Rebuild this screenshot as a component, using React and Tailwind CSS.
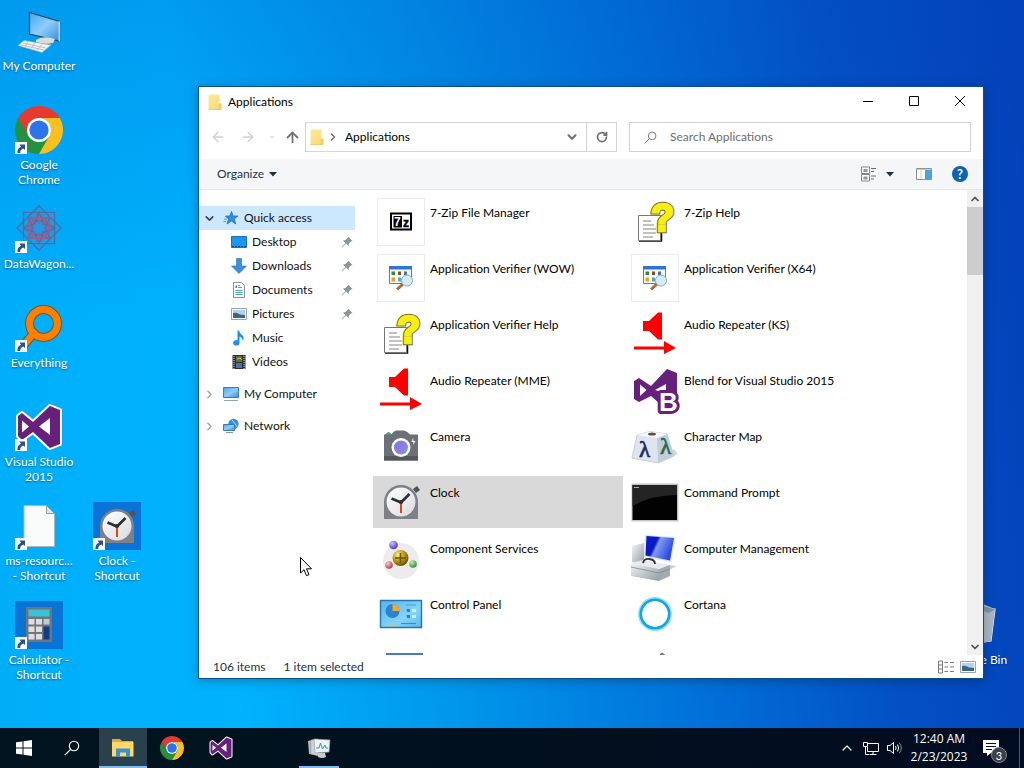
import React from 'react';
import clsx from 'clsx';
import {
  ArrowLeft,
  ArrowRight,
  ArrowUp,
  ChevronDown,
  ChevronRight,
  ChevronUp,
  RotateCw,
} from 'lucide-react';

const Svg = ({ box = 48, className = 'size-12', children }) => (
  <svg
    viewBox={`0 0 ${box} ${box}`}
    className={clsx('block shrink-0 overflow-visible', className)}
    fill="none"
    aria-hidden="true"
  >
    {children}
  </svg>
);

// Gradients shared by every icon on the page
const Gradients = () => (
  <svg className="absolute size-0" aria-hidden="true">
    <defs>
      <linearGradient id="screen" x1="0" y1="0" x2="1" y2="1">
        <stop offset="0" stopColor="#3fa9f0" />
        <stop offset="0.5" stopColor="#8fcdfa" />
        <stop offset="1" stopColor="#2f8fe0" />
      </linearGradient>
      <linearGradient id="folder" x1="0" y1="0" x2="1" y2="1">
        <stop offset="0" stopColor="#fdeaa0" />
        <stop offset="1" stopColor="#f8d870" />
      </linearGradient>
      <linearGradient id="metal" x1="0" y1="0" x2="1" y2="1">
        <stop offset="0" stopColor="#f4f6f7" />
        <stop offset="1" stopColor="#939da3" />
      </linearGradient>
      <linearGradient id="royal" x1="0" y1="0" x2="1" y2="0.4">
        <stop offset="0" stopColor="#0a1fd0" />
        <stop offset="0.4" stopColor="#0818c0" />
        <stop offset="0.5" stopColor="#7f9cf4" />
        <stop offset="1" stopColor="#2a48dc" />
      </linearGradient>
      <linearGradient id="lens" x1="0" y1="0" x2="1" y2="1">
        <stop offset="0" stopColor="#4f8fe8" />
        <stop offset="0.5" stopColor="#9a78dc" />
        <stop offset="1" stopColor="#5aa8f0" />
      </linearGradient>
      <linearGradient id="face" x1="0" y1="0" x2="1" y2="1">
        <stop offset="0" stopColor="#ffffff" />
        <stop offset="1" stopColor="#d8dadd" />
      </linearGradient>
      <linearGradient id="panel" x1="0" y1="0" x2="1" y2="1">
        <stop offset="0" stopColor="#4fb4ea" />
        <stop offset="0.6" stopColor="#86d4f8" />
        <stop offset="1" stopColor="#5abcec" />
      </linearGradient>
      <radialGradient id="gold" cx="0.35" cy="0.3" r="0.8">
        <stop offset="0" stopColor="#fff08a" />
        <stop offset="0.5" stopColor="#b89410" />
        <stop offset="1" stopColor="#5a4600" />
      </radialGradient>
      <radialGradient id="violet" cx="0.35" cy="0.3" r="0.8">
        <stop offset="0" stopColor="#c8c0ff" />
        <stop offset="1" stopColor="#3d2bb8" />
      </radialGradient>
      <radialGradient id="rose" cx="0.35" cy="0.3" r="0.8">
        <stop offset="0" stopColor="#ffc8c8" />
        <stop offset="1" stopColor="#a83038" />
      </radialGradient>
      <radialGradient id="leaf" cx="0.35" cy="0.3" r="0.8">
        <stop offset="0" stopColor="#b8f0b0" />
        <stop offset="1" stopColor="#2c8030" />
      </radialGradient>
    </defs>
  </svg>
);

const Chrome = ({ className }) => (
  <Svg className={className}>
    <path d="M3.22 12A24 24 0 0 1 44.78 12L24 12A12 12 0 0 0 13.61 30Z" fill="#e53b2e" />
    <path d="M3.22 12L13.61 30A12 12 0 0 0 34.39 30L24 48A24 24 0 0 1 3.22 12Z" fill="#24913f" />
    <path d="M44.78 12A24 24 0 0 1 24 48L34.39 30A12 12 0 0 0 24 12Z" fill="#fcc01c" />
    <circle cx="24" cy="24" r="12" fill="#fff" />
    <circle cx="24" cy="24" r="9.6" fill="#2b74ea" />
  </Svg>
);

const VisualStudio = ({ className }) => (
  <Svg className={className}>
    <path
      d="M35 3L45 7V41L35 45L18 29L7 37L3 33V13L7 10L18 19Z"
      fill="#68217a"
      stroke="#fff"
      strokeWidth="4"
      strokeLinejoin="round"
      className="[paint-order:stroke]"
    />
    <path d="M7 17.5V29.5L14 23.5ZM35 15V32L24 23.5Z" fill="#fff" />
  </Svg>
);

const Blend = () => (
  <Svg>
    <path d="M36 3L46 7V42L36 44L20 30L8 36L3 33V15L8 12L20 20Z" fill="#68217a" />
    <path d="M9 18.5V30L15.5 24ZM35 18L24 24L35 27Z" fill="#fff" />
    <text
      x="28"
      y="45"
      fontSize="26"
      fontWeight="700"
      fill="#fff"
      stroke="#68217a"
      strokeWidth="6"
      strokeLinejoin="round"
      className="font-['Liberation_Sans',sans-serif] [paint-order:stroke]"
    >
      B
    </text>
  </Svg>
);

const MyComputer = () => (
  <Svg>
    <path d="M14.5 5.5L44.5 14.5V34L14.5 27Z" fill="url(#screen)" stroke="#26465c" strokeWidth="1.2" />
    <path d="M43.5 14L45 14.5V34.5L43.5 34Z" fill="#c9d3d8" />
    <path d="M21 33Q28 28 40 32L38 36Q29 38 21 35Z" fill="#d8dde0" />
    <path d="M9 33.5L36 38L27 45.5L3 38.5Z" fill="#f2f1ee" stroke="#a8b0b4" strokeWidth="0.6" />
    <path d="M8 36L31 41M6 38L29 43M13 34.5L10 40M20 36L16 41.5M27 37.5L22 43" stroke="#b4b8ba" strokeWidth="0.8" />
  </Svg>
);

const DataWagon = () => (
  <Svg>
    <g strokeWidth="1.3">
      {[0, 45, 90, 135].map(angle => (
        <g key={angle} transform={`rotate(${angle} 24 23)`}>
          <path d="M2 23L13 12L24 17L35 12L46 23L35 34L24 29L13 34Z" stroke="#57699f" />
          <path d="M8 23L16 17L24 21L32 17L40 23L32 29L24 25L16 29Z" stroke="#a05c8c" />
        </g>
      ))}
      <circle cx="24" cy="23" r="10" stroke="#b45478" />
    </g>
    <circle cx="24" cy="23" r="4.5" fill="#1f9ae8" />
  </Svg>
);

const Everything = () => (
  <Svg>
    <g strokeLinecap="round">
      <path d="M19 29L8 42" stroke="#7a5428" strokeWidth="9" />
      <circle cx="28.5" cy="19.5" r="14" stroke="#7a5428" strokeWidth="9" />
      <path d="M19 29L8 42" stroke="#ff8000" strokeWidth="7" />
      <circle cx="28.5" cy="19.5" r="14" stroke="#ff8000" strokeWidth="7" />
    </g>
  </Svg>
);

const BlankFile = () => (
  <Svg>
    <path d="M9 3.5H31.5L39.5 11.5V44.5H9Z" fill="#fafbfb" stroke="#a9b6bd" />
    <path d="M31.5 3.5V11.5H39.5Z" fill="#dfe6ea" stroke="#8d9aa2" />
  </Svg>
);

const ClockFace = () => (
  <>
    <path d="M36 11L40 8L43 12L39 15Z" fill="#4f5358" />
    <path d="M7 24A17 17 0 0 1 41 24V41H7Z" fill="#7d8086" />
    <circle cx="24" cy="24" r="14.5" fill="url(#face)" />
    <path d="M14.5 20.5L24 24.5L32.5 16" stroke="#2e2e30" strokeWidth="2.6" strokeLinejoin="round" />
    <path d="M24 25V35" stroke="#d8481c" strokeWidth="2" />
    <circle cx="24" cy="24" r="2" fill="#2e2e30" />
  </>
);

const Clock = () => (
  <Svg>
    <ClockFace />
  </Svg>
);

const ClockTile = () => (
  <Svg>
    <path d="M0 0H48V48H0Z" fill="#0a74d6" />
    <ClockFace />
  </Svg>
);

const Calculator = () => (
  <Svg>
    <path d="M0 0H48V48H0Z" fill="#0a74d6" />
    <path d="M11 6H37V41H11Z" fill="#717478" />
    <path d="M13.5 8.5H34.5V15.5H13.5Z" fill="#38c4d8" />
    {[18, 25.5, 33].map(y => (
      <g key={y} fill="#dedee2">
        <path d={`M13.5 ${y}h6v5.5h-6z`} />
        <path d={`M21 ${y}h6v5.5h-6z`} />
      </g>
    ))}
    <path d="M28.5 18H34.5V23.5H28.5Z" fill="#c0ccd0" />
    <path d="M28.5 25.5H34.5V38.5H28.5Z" fill="#0c3f86" />
  </Svg>
);

const RecycleBin = () => (
  <Svg>
    <path d="M8 6L42 8L38 40L12 43Z" fill="#b9c3ce" stroke="#e8eef2" strokeWidth="1.2" />
    <path d="M30 3L42 8L38 40L30 42Z" fill="#a9b6c4" />
    <path d="M30 5L42 8.5L36 12L30 10Z" fill="#7f93a8" />
  </Svg>
);

const ShortcutArrow = () => (
  <svg viewBox="0 0 12 12" className="absolute bottom-0 left-0 size-3 bg-white" aria-hidden="true">
    <path d="M2.5 11C2 8 3.5 5.5 6 4.7L4.5 2.5H10V8L8.3 6.5C6 7.2 5 8.8 5.2 11Z" fill="#29508f" />
  </svg>
);

const SevenZip = () => (
  <Svg>
    <path d="M14 15.5H34V31.5H14Z" fill="#fff" stroke="#000" strokeWidth="2" />
    <path d="M16.5 18H25V29.5H16.5Z" fill="#000" />
    <g fontSize="12" fontWeight="700" className="font-['Liberation_Sans',sans-serif]">
      <text x="17" y="28" fill="#fff">7</text>
      <text x="26" y="29" fill="#000" stroke="#000" strokeWidth="0.5">z</text>
    </g>
  </Svg>
);

const Verifier = () => (
  <Svg>
    <path d="M12.5 12.5H34.5V29.5H12.5Z" fill="#fbfcf4" stroke="#5b7fa8" />
    <path d="M12 12H35V15.5H12Z" fill="#2f74d0" />
    <path d="M14.5 17.5H18V21H14.5Z" fill="#2e8c3c" />
    <path d="M21 17.5H24V21H21Z" fill="#8a4a28" />
    <path d="M27 17.5H30V21H27Z" fill="#3f72c0" />
    <path d="M14.5 23.5H18V27.5H14.5Z" fill="#e8a020" />
    <path d="M21 23.5H24V27.5H21Z" fill="#50a8c8" />
    <path d="M26 30L20 35.5" stroke="#a86c38" strokeWidth="3" />
    <circle cx="30" cy="26.5" r="5.5" fill="#d3ecf8" stroke="#8fa9b8" />
  </Svg>
);

const HelpFile = () => (
  <Svg>
    <path d="M8 43H30.5V19" stroke="#111" strokeWidth="1.5" />
    <path d="M7.5 17.5H29.5V42.5H7.5Z" fill="#fdfdfd" stroke="#777" />
    <path d="M12 23H20M12 27H23M12 31H25M12 35H25M12 39H22" stroke="#888" strokeWidth="1.2" />
    <g fontSize="38" fontWeight="700" className="font-['Liberation_Sans',sans-serif]">
      <text x="20" y="33" stroke="#6f6c20" strokeWidth="4.5">?</text>
      <text x="20" y="33" fill="#f9ee14" stroke="#f9ee14" strokeWidth="2.5">?</text>
    </g>
  </Svg>
);

const Speaker = () => (
  <Svg>
    <path d="M12 11H18L27 2.5H31V29.5H27L18 21H12Z" fill="#fd0000" />
    <path d="M3 36.5H33V31L45 38L33 44V39.5H3Z" fill="#fd0000" />
  </Svg>
);

const Camera = () => (
  <Svg>
    <path d="M8 13Q11.5 7 15 13Z" fill="#3da890" />
    <path d="M7 12.5H14Q17 9 19 8.5H27Q30 9 33 12.5H41V38.5H7Z" fill="#6d7177" />
    <path d="M7 34H41V38.5H7Z" fill="#54575c" />
    <circle cx="24" cy="25.5" r="9.5" fill="#fff" />
    <circle cx="24" cy="25.5" r="7" fill="url(#lens)" />
    <path d="M36 16L34.5 20H36.5L36 23L38.5 19H36.5Z" fill="#fff" />
  </Svg>
);

const CharacterMap = () => (
  <Svg>
    <path d="M28 40L47 32L43 27Z" fill="#d6dade" />
    <path d="M6 13L19 9.5L36 12L43 34L27 41L1 36Z" fill="#dfe5ee" stroke="#b4bdca" strokeWidth="0.7" />
    <path d="M26 16L36 12L43 34L27 41Z" fill="#c2cddb" />
    <path d="M6 13L19 9.5L36 12L26 16Z" fill="#f6f8fb" />
    <ellipse cx="21" cy="12" rx="4" ry="1.6" fill="#5a5048" />
    <g fontSize="23" className="font-['Liberation_Serif',serif]" strokeWidth="0.7">
      <text x="8" y="35" fill="#1c2468" stroke="#1c2468">λ</text>
      <text x="29" y="32" fill="#1f6a50" stroke="#1f6a50">λ</text>
    </g>
  </Svg>
);

const Prompt = () => (
  <Svg>
    <path d="M0.5 5.5H47.5V43.5H0.5Z" fill="#c4c4c4" />
    <path d="M1.5 7H46V42H1.5Z" fill="#020202" />
    <path d="M1.5 7H46V17Q20 17 1.5 28Z" fill="#242424" />
    <path d="M3 9.5H8" stroke="#aaa" />
  </Svg>
);

const ComponentServices = () => (
  <Svg>
    <circle cx="24" cy="27" r="18" fill="#ececee" />
    <circle cx="23.5" cy="24" r="8" fill="url(#gold)" />
    <path d="M18 24H29M23.5 19V29" stroke="#6e5400" strokeWidth="1.6" />
    <circle cx="16.5" cy="11" r="4.3" fill="url(#violet)" />
    <circle cx="12" cy="31" r="3.8" fill="url(#rose)" />
    <circle cx="36" cy="30" r="3.8" fill="url(#leaf)" />
  </Svg>
);

const ComputerManagement = () => (
  <Svg>
    <path d="M1 12L13 9V30L1 28Z" fill="url(#metal)" />
    <path d="M14 1L44.5 3L40 28L13 23Z" fill="#dce4ee" />
    <path d="M15.5 2L43 4L39 26.5L14.5 21.5Z" fill="url(#royal)" />
    <path d="M30 30L46 32L38 36Z" fill="#c8ced2" />
    <path d="M0 29L12 26L39 31L28 35Z" fill="#e8ebec" />
    <path d="M12 29Q13 24.5 18 25Q24 25.5 24 30" stroke="#30343a" strokeWidth="1.8" />
    <path d="M0 29L28 35V47L0 42Z" fill="url(#metal)" />
    <path d="M28 35L39 31V42L28 47Z" fill="#a2abb0" />
    <path d="M0 33L28 39L39 35" stroke="#7f888d" strokeWidth="0.8" />
  </Svg>
);

const ControlPanel = () => (
  <Svg>
    <path d="M3.5 10.5H44.5V37.5H3.5Z" fill="url(#panel)" stroke="#2277b0" strokeWidth="1.4" />
    <circle cx="15.5" cy="21" r="7" fill="#2a82d0" />
    <path d="M15.5 21V14A7 7 0 0 1 22.5 21Z" fill="#f8a820" />
    <path d="M29 15H39M29 20H33M29 26H33" stroke="#4a9cd0" />
    <path d="M35 19H39V22H35ZM35 25H39V28H35Z" fill="#cdeefb" />
    <path d="M30 19H33V22H30ZM30 25H33V28H30Z" fill="#2a82c4" />
    <path d="M10 31.5H22M10 34H20" stroke="#e0b860" strokeWidth="1.2" />
    <path d="M24 33.5H39" stroke="#3a8cc0" strokeWidth="1.2" />
  </Svg>
);

const Cortana = () => (
  <Svg>
    <circle cx="24" cy="24" r="15" stroke="#8fe4fb" strokeWidth="4" />
    <circle cx="24" cy="24" r="14.2" stroke="#12a5e4" strokeWidth="2.6" />
  </Svg>
);

const BlueWindow = () => (
  <Svg>
    <path d="M9 7H46V42H9Z" fill="#4a7ab8" />
  </Svg>
);

const Needle = () => (
  <Svg>
    <path d="M29 8L31 6.5L36 10V40H29Z" fill="#6c7680" />
  </Svg>
);

const Folder = ({ className }) => (
  <Svg box={16} className={className}>
    <path d="M1.5 0.5H12.5V9.5L14.5 11V15.5H1.5Z" fill="url(#folder)" />
    <path d="M12 15.5V11L14 9.5V15.5H1.5" stroke="#e6c45c" strokeWidth="0.8" />
  </Svg>
);

const StarIcon = () => (
  <Svg box={16} className="size-4">
    <path d="M8.5 1.5L10.3 6H15L11.3 9L12.8 14L8.5 11L4 14L5.5 9L2.5 6H6.7Z" fill="#2e8fe0" stroke="#1c6cb8" strokeWidth="0.7" />
    <path d="M1 9H4M0.5 11.5H3M2 6.5H3" stroke="#4aa0e8" />
  </Svg>
);

const DesktopIcon = () => (
  <Svg box={16} className="size-4">
    <path d="M0.5 2.5H15.5V13.5H0.5Z" fill="#1a97ee" stroke="#1673c4" />
    <path d="M1 12.5H15" stroke="#0c4f94" strokeDasharray="2 1" />
  </Svg>
);

const DownloadIcon = () => (
  <Svg box={16} className="size-4">
    <path d="M5.5 0.5H10.5V8H15.5L8 15.5L0.5 8H5.5Z" fill="#3d8edc" stroke="#2c74bd" strokeWidth="0.6" />
  </Svg>
);

const DocumentIcon = () => (
  <Svg box={16} className="size-4">
    <path d="M2.5 0.5H10.5L13.5 3.5V15.5H2.5Z" fill="#fff" stroke="#8b969e" />
    <path d="M7 3.5H9M7 5.5H11M4.5 8.5H11.5M4.5 10.5H11.5M4.5 12.5H11.5" stroke="#4ba0c4" />
    <path d="M4.5 3.5H6V6H4.5Z" fill="#3088b0" />
  </Svg>
);

const PictureIcon = ({ className = 'size-4' }) => (
  <Svg box={16} className={className}>
    <path d="M0.5 2.5H15.5V13.5H0.5Z" fill="#fff" stroke="#98a3ab" />
    <path d="M2 4H14V12H2Z" fill="#aed4f0" />
    <path d="M2 7Q6 6 9 8.5L14 9V12H2Z" fill="#3d6486" />
  </Svg>
);

const MusicIcon = () => (
  <Svg box={16} className="size-4">
    <path d="M6.5 0.5H8Q8.5 3.5 11 5Q14 7.5 11.5 11Q12 8 8.5 6.5V12.5A3.2 2.7 0 1 1 6.5 10.3Z" fill="#1e8ce8" />
  </Svg>
);

const VideoIcon = () => (
  <Svg box={16} className="size-4">
    <path d="M1.5 1H14.5V15H1.5Z" fill="#2a2d33" />
    <path d="M3 2V15M13 2V15" stroke="#e8e8e8" strokeDasharray="1 1" />
    <path d="M5 2H11V8H5Z" fill="#56724a" />
    <path d="M5 9H11V14H5Z" fill="#4d7496" />
    <path d="M6 5L9 4L11 6" stroke="#d8c040" />
  </Svg>
);

const MonitorIcon = () => (
  <Svg box={16} className="size-4">
    <path d="M0.5 1.5H15.5V11.5H0.5Z" fill="url(#screen)" stroke="#3c7ca8" />
    <path d="M1 14.5H15" stroke="#9aa6ac" />
  </Svg>
);

const NetworkIcon = () => (
  <Svg box={16} className="size-4">
    <circle cx="10.5" cy="6" r="5.2" fill="#3490d8" />
    <path d="M9 2Q12 5 14 9" stroke="#a4d8f8" />
    <path d="M0.5 6.5H11.5V12.5H0.5Z" fill="url(#screen)" stroke="#3c7ca8" />
    <path d="M3 14.5H10" stroke="#7f98a8" />
  </Svg>
);

const Pin = () => (
  <Svg box={12} className="size-3">
    <path d="M7 0.5L11.5 5L10 5.5L8 7.5L7.5 10L5 7.5L1 11.5L0.5 11L4.5 7L2 4.5L4.5 4L6.5 2Z" fill="#8d9499" />
  </Svg>
);

const Caret = ({ className }) => (
  <svg viewBox="0 0 8 5" className={clsx('h-[5px] w-2 shrink-0', className)} aria-hidden="true">
    <path d="M0 0H8L4 4.5Z" fill="currentColor" />
  </svg>
);

const Magnifier = ({ className }) => (
  <Svg box={16} className={className}>
    <circle cx="10" cy="6" r="4.7" stroke="currentColor" strokeWidth="1.1" />
    <path d="M6.5 9.5L0.8 15.2" stroke="currentColor" strokeWidth="1.2" />
  </Svg>
);

const shortcuts = [
  { name: 'My Computer', icon: MyComputer, linked: false },
  { name: 'Google Chrome', icon: Chrome, linked: true },
  { name: 'DataWagon...', icon: DataWagon, linked: true },
  { name: 'Everything', icon: Everything, linked: true },
  { name: 'Visual Studio 2015', icon: VisualStudio, linked: true },
  { name: 'ms-resourc...\n- Shortcut', icon: BlankFile, linked: true },
  { name: 'Calculator - Shortcut', icon: Calculator, linked: true },
];

const quickAccess = [
  { name: 'Desktop', icon: DesktopIcon, pinned: true },
  { name: 'Downloads', icon: DownloadIcon, pinned: true },
  { name: 'Documents', icon: DocumentIcon, pinned: true },
  { name: 'Pictures', icon: PictureIcon, pinned: true },
  { name: 'Music', icon: MusicIcon },
  { name: 'Videos', icon: VideoIcon },
];

const files = [
  { name: '7-Zip File Manager', icon: SevenZip, framed: true },
  { name: '7-Zip Help', icon: HelpFile },
  { name: 'Application Verifier (WOW)', icon: Verifier, framed: true },
  { name: 'Application Verifier (X64)', icon: Verifier, framed: true },
  { name: 'Application Verifier Help', icon: HelpFile },
  { name: 'Audio Repeater (KS)', icon: Speaker },
  { name: 'Audio Repeater (MME)', icon: Speaker },
  { name: 'Blend for Visual Studio 2015', icon: Blend },
  { name: 'Camera', icon: Camera },
  { name: 'Character Map', icon: CharacterMap },
  { name: 'Clock', icon: Clock, selected: true },
  { name: 'Command Prompt', icon: Prompt },
  { name: 'Component Services', icon: ComponentServices },
  { name: 'Computer Management', icon: ComputerManagement },
  { name: 'Control Panel', icon: ControlPanel },
  { name: 'Cortana', icon: Cortana },
];

const DesktopShortcut = ({ name, icon: Icon, linked, className }) => (
  <button
    type="button"
    className={clsx('flex flex-col items-center gap-[3px] pt-[7px] leading-[15px] text-white', className)}
  >
    <span className="relative block size-12">
      <Icon />
      {linked && <ShortcutArrow />}
    </span>
    <span className="whitespace-pre-line [text-shadow:0_1px_2px_rgba(0,40,80,0.6)]">{name}</span>
  </button>
);

const TitleBar = () => (
  <header className="flex h-[30px] items-center">
    <Folder className="ml-2 size-4" />
    <h1 className="ml-[5px] flex-1 text-black">Applications</h1>
    {[
      { label: 'Minimize', d: 'M0 5.5H10' },
      { label: 'Maximize', d: 'M0.5 0.5H9.5V9.5H0.5Z' },
      { label: 'Close', d: 'M0 0L10 10M10 0L0 10' },
    ].map(({ label, d }) => (
      <button key={label} type="button" aria-label={label} className="flex h-full w-[46px] items-center justify-center pb-[2px]">
        <svg viewBox="0 0 10 10" className="size-[10px]" fill="none" stroke="#000" aria-hidden="true">
          <path d={d} />
        </svg>
      </button>
    ))}
  </header>
);

const AddressRow = () => (
  <div className="flex h-[42px] items-center pr-3 pb-[2px]">
    <button type="button" aria-label="Back" className="ml-2 flex w-[22px] justify-center text-[#d0d0d0]">
      <ArrowLeft size={16} strokeWidth={2} />
    </button>
    <button type="button" aria-label="Forward" className="ml-2 flex w-[22px] justify-center text-[#d0d0d0]">
      <ArrowRight size={16} strokeWidth={2} />
    </button>
    <button type="button" aria-label="Recent locations" className="ml-2 flex w-[10px] justify-center text-[#d0d0d0]">
      <ChevronDown size={8} strokeWidth={3} />
    </button>
    <button type="button" aria-label="Up" className="ml-1 flex w-[22px] justify-center text-[#707070]">
      <ArrowUp size={17} strokeWidth={2.5} />
    </button>
    <div className="ml-[2px] flex h-[30px] flex-1 border border-[#d5d5d5]">
      <div className="flex flex-1 items-center">
        <Folder className="ml-[3px] size-4" />
        <ChevronRight size={12} strokeWidth={2.5} className="ml-[2px] text-[#606060]" />
        <button type="button" className="ml-[6px] text-black">Applications</button>
        <button type="button" aria-label="Previous locations" className="mr-[7px] ml-auto text-[#707070]">
          <ChevronDown size={14} strokeWidth={3.5} />
        </button>
      </div>
      <button
        type="button"
        aria-label="Refresh"
        className="flex w-[30px] items-center justify-center border-l border-[#d5d5d5] text-[#707070]"
      >
        <RotateCw size={12} strokeWidth={3.5} />
      </button>
    </div>
    <label className="ml-3 flex h-[30px] w-[342px] items-center border border-[#d0d0d0] pl-[14px] text-[#6d6d6d]">
      <Magnifier className="size-[13px]" />
      <input
        type="search"
        aria-label="Search Applications"
        placeholder="Search Applications"
        className="ml-[13px] min-w-0 flex-1 outline-none placeholder:text-[#6d6d6d]"
      />
    </label>
  </div>
);

const Toolbar = () => (
  <div className="flex h-[31px] items-center border-b border-[#e3e6e8] bg-[#f5f6f7] pr-[15px] pl-[18px]">
    <button type="button" className="flex items-center gap-[5px] text-[#1e2f45]">
      Organize
      <Caret />
    </button>
    <button type="button" aria-label="Change your view" className="ml-auto">
      <Svg box={16} className="size-4">
        <path d="M0.5 1H8.5V7.5H0.5ZM0.5 8.5H8.5V15H0.5Z" fill="#fff" stroke="#858585" />
        <path d="M2.5 3H6.5V6H2.5ZM2.5 10.5H6.5V13.5H2.5Z" fill="#8a9aa8" />
        <path d="M10 2.5H15M10 5.5H13M10 10H15M10 13H13" stroke="#6a6a6a" />
      </Svg>
    </button>
    <button type="button" aria-label="More view options" className="ml-[9px] py-2 text-[#1e2f45]">
      <Caret />
    </button>
    <button type="button" aria-label="Show the preview pane" className="ml-[22px]">
      <Svg box={16} className="size-4">
        <path d="M0.5 2.5H15.5V13.5H0.5Z" fill="#fff" stroke="#8a8f94" />
        <path d="M9 4H15V13H9Z" fill="#4ba3e4" />
        <path d="M5 4V13" stroke="#c8ccd0" />
        <path d="M1 3H15" stroke="#a8927c" />
      </Svg>
    </button>
    <button
      type="button"
      aria-label="Get help"
      className="ml-5 flex size-4 items-center justify-center rounded-full bg-[#0c62b4] text-[13px] leading-4 font-bold text-white"
    >
      ?
    </button>
  </div>
);

const NavRoot = ({ name, icon: Icon, open }) => (
  <button
    type="button"
    className={clsx('flex h-6 w-full items-center pl-1', open && 'bg-[#cce8ff]')}
  >
    {open ? (
      <ChevronDown size={13} strokeWidth={3} className="text-[#404040]" />
    ) : (
      <ChevronRight size={13} strokeWidth={3} className="text-[#a8a8a8]" />
    )}
    <span className="ml-[7px]">
      <Icon />
    </span>
    <span className="ml-[5px]">{name}</span>
  </button>
);

const NavPane = () => (
  <nav className="w-[156px] shrink-0 pt-4">
    <NavRoot name="Quick access" icon={StarIcon} open />
    <ul>
      {quickAccess.map(({ name, icon: Icon, pinned }) => (
        <li key={name}>
          <button type="button" className="flex h-6 w-full items-center pr-[2px] pl-8">
            <Icon />
            <span className="mr-auto ml-[5px]">{name}</span>
            {pinned && <Pin />}
          </button>
        </li>
      ))}
    </ul>
    <div className="mt-2 flex flex-col gap-2">
      <NavRoot name="My Computer" icon={MonitorIcon} />
      <NavRoot name="Network" icon={NetworkIcon} />
    </div>
  </nav>
);

const FileGrid = () => (
  <ul className="ml-[18px] grid min-w-0 flex-1 grid-cols-[repeat(auto-fill,250px)] content-start gap-1 overflow-hidden pt-[6px]">
    {files.map(({ name, icon: Icon, framed, selected }) => (
      <li key={name}>
        <button
          type="button"
          className={clsx(
            'flex h-[52px] w-full items-start gap-[5px] px-1 pt-[2px] text-left text-black',
            selected && 'bg-[#d9d9d9]'
          )}
        >
          <span className={clsx('size-12 shrink-0', framed && 'outline -outline-offset-1 outline-[#ebebeb]')}>
            <Icon />
          </span>
          <span className="pt-[7px]">{name}</span>
        </button>
      </li>
    ))}
    <li className="px-1 pt-[2px]">
      <BlueWindow />
    </li>
    <li className="px-1 pt-[2px]">
      <Needle />
    </li>
  </ul>
);

const ScrollBar = () => (
  <div className="flex w-4 shrink-0 flex-col bg-[#f0f0f0] text-[#505050]">
    <button type="button" aria-label="Scroll up" className="flex h-[17px] items-center justify-center">
      <ChevronUp size={12} strokeWidth={3.5} />
    </button>
    <div className="h-[68px] bg-[#cdcdcd]" />
    <button type="button" aria-label="Scroll down" className="mt-auto flex h-[17px] items-center justify-center">
      <ChevronDown size={12} strokeWidth={3.5} />
    </button>
  </div>
);

const StatusBar = () => (
  <footer className="flex h-[23px] items-center pr-[7px] pl-[14px] text-[#1e2f45]">
    <span>106 items</span>
    <span className="ml-[18px]">1 item selected</span>
    <button type="button" aria-label="Details view" className="ml-auto">
      <Svg box={16} className="size-4">
        <path d="M0.5 2H4.5V14H0.5ZM0.5 6H4.5M0.5 10H4.5" stroke="#7a7a7a" />
        <path d="M6.5 3.5H10M12 3.5H16M6.5 8H10M12 8H16M6.5 12.5H10M12 12.5H16" stroke="#7a7a7a" />
      </Svg>
    </button>
    <button type="button" aria-label="Large icons view" className="ml-[6px]">
      <PictureIcon />
    </button>
  </footer>
);

const ExplorerWindow = () => (
  <section className="absolute top-[86px] right-[40px] bottom-[49px] left-[198px] flex flex-col border border-[#0b4f86] bg-white shadow-[0_2px_10px_rgba(0,0,0,0.25)]">
    <TitleBar />
    <AddressRow />
    <Toolbar />
    <div className="flex min-h-0 flex-1 text-[#111]">
      <NavPane />
      <FileGrid />
      <ScrollBar />
    </div>
    <StatusBar />
  </section>
);

const TaskButton = ({ label, active, running, children }) => (
  <button
    type="button"
    aria-label={label}
    className={clsx('relative flex w-12 items-center justify-center', active && 'bg-[#2b404d]')}
  >
    {children}
    {active && <span className="absolute inset-x-0 bottom-0 h-[2px] bg-[#7fbcee]" />}
    {running && <span className="absolute inset-x-1 bottom-0 h-[2px] bg-[#7fbcee]" />}
  </button>
);

const Taskbar = () => (
  <footer className="flex h-10 shrink-0 items-stretch bg-linear-to-r from-[#01141f] to-[#020c20] text-white">
    <TaskButton label="Start">
      <Svg box={16} className="size-4">
        <path d="M0 2.3L6.5 1.4V7.5H0ZM7.5 1.2L16 0V7.5H7.5ZM0 8.5H6.5V14.6L0 13.7ZM7.5 8.5H16V16L7.5 14.8Z" fill="#fff" />
      </Svg>
    </TaskButton>
    <TaskButton label="Search">
      <Magnifier className="size-4" />
    </TaskButton>
    <div className="ml-[3px] flex gap-px">
      <TaskButton label="File Explorer" active>
        <Svg box={24} className="size-6">
          <path d="M1 3H9L11 5H22V20H1Z" fill="#e8a62c" />
          <path d="M1 6H22.5V20.5H1Z" fill="#ffd868" />
          <path d="M5 21V12.5H19V21H15V16.5H9V21Z" fill="#3c8fd0" />
        </Svg>
      </TaskButton>
      <TaskButton label="Google Chrome">
        <Chrome className="size-6" />
      </TaskButton>
      <TaskButton label="Visual Studio 2015">
        <VisualStudio className="size-6" />
      </TaskButton>
    </div>
    <div className="ml-[50px] flex">
      <TaskButton label="Performance Monitor" running>
        <Svg box={24} className="size-6">
          <path d="M1 5L8 3V19L2 18Z" fill="#b4babc" />
          <path d="M4 4L11 3V20L4 18Z" fill="#d0d4d6" stroke="#8c9498" strokeWidth="0.5" />
          <path d="M7 3L23 4L22 16L8 17Z" fill="#eef2f4" stroke="#9aa2a6" strokeWidth="0.7" />
          <path d="M9 12L12 12L13.5 7L15.5 13L18 9L19 12H21" stroke="#2f9ab8" />
          <path d="M11 17H18L19 21Q15 23 11 21Z" fill="#c8ccce" />
        </Svg>
      </TaskButton>
    </div>
    <div className="ml-auto flex items-center">
      <button type="button" aria-label="Show hidden icons">
        <ChevronUp size={16} strokeWidth={1.8} />
      </button>
      <button type="button" aria-label="Network" className="ml-2">
        <Svg box={16} className="size-4">
          <path d="M5 3.5H15.5V11.5H4.5V7M10 11.5V14.5M6.5 14.5H13.5M2.5 7V14.5H6" stroke="#fff" />
          <path d="M0.5 2.5H4.5V6.5H0.5Z" stroke="#fff" />
        </Svg>
      </button>
      <button type="button" aria-label="Volume" className="ml-2">
        <Svg box={16} className="size-4">
          <path d="M0.5 5.5H3L6.5 2.5V13.5L3 10.5H0.5Z" stroke="#fff" />
          <path d="M8.5 6Q9.8 8 8.5 10M10.5 4.5Q12.8 8 10.5 11.5" stroke="#fff" />
          <path d="M12.5 3Q16 8 12.5 13" stroke="#8a949c" />
        </Svg>
      </button>
      <button type="button" className="ml-2 w-[56px] text-center font-['Open_Sans',sans-serif] leading-[18px] whitespace-nowrap">
        <time dateTime="2023-02-23T00:40" className="flex flex-col items-center">
          <span>12:40 AM</span>
          <span>2/23/2023</span>
        </time>
      </button>
      <button type="button" aria-label="3 new notifications" className="relative ml-4 size-6">
        <Svg box={24} className="size-6">
          <path d="M0 4H16V17H8L4 20V17H0Z" fill="#fff" />
          <path d="M3 7.5H13M3 10.5H13M3 13.5H9" stroke="#02101f" strokeWidth="1.2" />
        </Svg>
        <span className="absolute right-0 -bottom-[3px] flex size-4 items-center justify-center rounded-full border border-[#7c8288] bg-[#3a4046] text-[11px] leading-none">
          3
        </span>
      </button>
      <span className="ml-3 h-10 w-px bg-[#4c5560]" />
      <button type="button" aria-label="Show desktop" className="h-10 w-1" />
    </div>
  </footer>
);

export default function App() {
  return (
    <div className="flex h-screen flex-col overflow-hidden font-['Lato','Noto_Sans',sans-serif] text-[12px] leading-4">
      <Gradients />
      <main className="relative min-h-0 flex-1 bg-[linear-gradient(to_bottom,rgba(0,70,190,0.2),transparent_45%),linear-gradient(84deg,#00aef8_0%,#00b2ff_22%,#0096ec_42%,#0074da_62%,#0350c4_82%,#0340b8_100%)]">
        <div className="grid w-max auto-rows-[99px] grid-cols-[78px_78px]">
          {shortcuts.map(item => (
            <DesktopShortcut key={item.name} {...item} className="col-start-1" />
          ))}
          <DesktopShortcut name="Clock - Shortcut" icon={ClockTile} linked className="col-start-2 row-start-6" />
        </div>
        <div className="absolute right-2 bottom-[35px] flex h-[99px] w-[78px] flex-col">
          <DesktopShortcut name="Recycle Bin" icon={RecycleBin} />
        </div>
        <ExplorerWindow />
        <svg viewBox="0 0 12 20" className="pointer-events-none absolute top-[557px] left-[300px] h-5 w-3" aria-hidden="true">
          <path d="M0.5 0.5V16L4 12.7L6.5 18.7L9 17.6L6.5 11.8H11.5Z" fill="#fff" stroke="#000" />
        </svg>
      </main>
      <Taskbar />
    </div>
  );
}
